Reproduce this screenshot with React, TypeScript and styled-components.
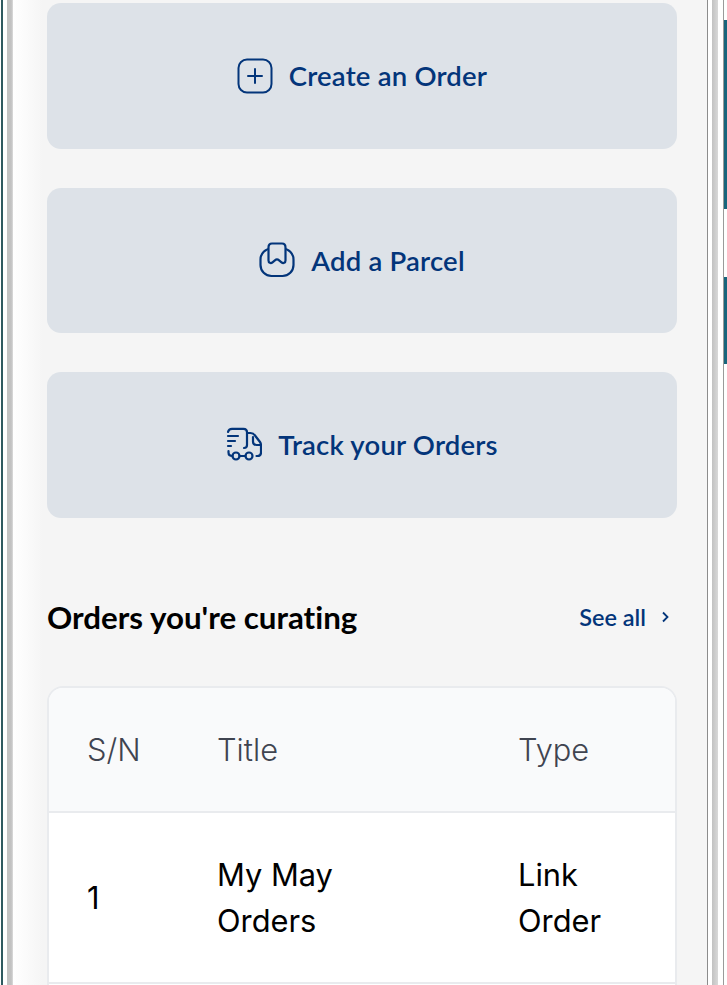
import React from 'react'
import styled, { createGlobalStyle } from 'styled-components'

const GlobalStyle = createGlobalStyle`
  html, body { margin: 0; padding: 0; background: #fff; }
  body { font-family: 'Lato', 'Liberation Sans', sans-serif; font-variant-ligatures: none; }
`

const actions = [
  { title: 'Create an Order', icon: <PlusIcon /> },
  { title: 'Add a Parcel', icon: <ParcelIcon /> },
  { title: 'Track your Orders', icon: <TruckIcon /> },
]

export default function App() {
  return (
    <>
      <GlobalStyle />
      <Window>
        <LeftChrome>
          <DarkEdge />
          <GreyEdge />
        </LeftChrome>
        <Content>
          <Actions>
            {actions.map(action => (
              <ActionCard key={action.title}>
                {action.icon}
                <span>{action.title}</span>
              </ActionCard>
            ))}
          </Actions>
          <SectionHeader>
            <SectionTitle>Orders you're curating</SectionTitle>
            <SeeAll>
              See all
              <svg width="10" height="12" viewBox="0 0 10 12" fill="none">
                <path d="M2 1.500 6.500 6 2 10.500" stroke="#03357a" strokeWidth="1.800" />
              </svg>
            </SeeAll>
          </SectionHeader>
          <TableCard>
            <HeadRow>
              <div>S/N</div>
              <div>Title</div>
              <div>Type</div>
            </HeadRow>
            <BodyRow>
              <div>1</div>
              <div>My May<br />Orders</div>
              <div>Link<br />Order</div>
            </BodyRow>
          </TableCard>
        </Content>
        <RightChrome>
          <GreyBand />
          <Tabs>
            <Tab $height={189} />
            <Tab $height={87} />
          </Tabs>
        </RightChrome>
      </Window>
    </>
  )
}

function PlusIcon() {
  return (
    <svg width="36" height="36" viewBox="0 0 36 36" fill="none" stroke="#03357a" strokeWidth="2">
      <rect x="1.500" y="1.500" width="33" height="33" rx="8.500" />
      <path d="M18 11v14M11 18h14" strokeLinecap="round" />
    </svg>
  )
}

function ParcelIcon() {
  return (
    <svg width="36" height="36" viewBox="0 0 36 36" fill="none" stroke="#03357a" strokeWidth="2.200">
      <rect x="1.500" y="6.500" width="33" height="27.500" rx="11" />
      <path
        d="M9.500 5.500C9.500 3 11 1.500 13 1.500h10c2 0 3.500 1.500 3.500 4v13c0 2.400-2.200 3.300-4 1.800l-2.400-2c-1.200-1-3-1-4.200 0l-2.400 2c-1.800 1.500-4 .6-4-1.800z"
        fill="#dde2e8"
      />
    </svg>
  )
}

function TruckIcon() {
  return (
    <svg width="36" height="36" viewBox="0 0 36 36" fill="none" stroke="#03357a" strokeWidth="2.200" strokeLinecap="round">
      <path d="M2 5c.5-2 2-3.200 4-3.200h11.500c2.300 0 3.500 1.200 3.500 3.500V18c0 2-1 3-3 3" />
      <path d="M21.500 6h3c2 0 3.500 1 4.500 2.500l5 6.500c.7 1 1 2 1 3v7.500c0 2.200-1.200 3.500-3.500 3.500h-1" />
      <path d="M27 10v4.500c0 2 1.200 3.500 3.500 3.500h4" />
      <path d="M13.500 29h6M2.500 24v1.500c0 2.200 1.500 3.500 4 3.500" />
      <path d="M2 9h10M2 14h7M2 19h3" />
      <circle cx="10" cy="29" r="3.500" />
      <circle cx="23" cy="29" r="3.500" />
    </svg>
  )
}

const Window = styled.div`
  display: flex;
  width: 727px;
  height: 985px;
  overflow: hidden;
  background: #fff;
`

const LeftChrome = styled.div`
  display: flex;
  flex: 0 0 13px;
  padding-left: 1px;
  box-sizing: border-box;
`

const DarkEdge = styled.div`
  width: 2px;
  margin-right: 4px;
  background: #2f5a60;
`

const GreyEdge = styled.div`
  width: 6px;
  background: linear-gradient(90deg, #c2c2c2 70%, #dcdcdc);
`

const Content = styled.div`
  flex: 0 0 695px;
  box-sizing: border-box;
  height: 985px;
  padding: 3px 30px 0 34px;
  border-right: 1px solid #8c8c8c;
  background: linear-gradient(90deg, #fff, #f5f5f5 30px);
`

const Actions = styled.div`
  display: flex;
  flex-direction: column;
  gap: 39px;
`

const ActionCard = styled.div`
  display: flex;
  align-items: center;
  justify-content: center;
  gap: 16px;
  height: 145.500px;
  border-radius: 14px;
  background: #dde2e8;
  color: #03357a;
  font-size: 27.500px;
  font-weight: 600;
  letter-spacing: 0.200px;
`

const SectionHeader = styled.div`
  display: flex;
  align-items: center;
  justify-content: space-between;
  height: 40px;
  margin-top: 79.500px;
  padding-right: 6px;
`

const SectionTitle = styled.h2`
  margin: 0;
  color: #000;
  font-size: 31.300px;
  font-weight: 700;
`

const SeeAll = styled.div`
  display: flex;
  align-items: center;
  gap: 15px;
  color: #03357a;
  font-size: 23.500px;
  font-weight: 600;
`

const TableCard = styled.div`
  box-sizing: border-box;
  height: 320px;
  margin-top: 49px;
  border: 2px solid #e9ebee;
  border-radius: 16px;
  background: #fff;
  overflow: hidden;
  font-family: 'Inter', 'Liberation Sans', sans-serif;
`

const Row = styled.div`
  display: grid;
  grid-template-columns: 130px 301px 1fr;
  align-items: center;
  padding-left: 38px;
`

const HeadRow = styled(Row)`
  height: 123px;
  border-bottom: 2px solid #e9ebee;
  background: #f9fafb;
  color: #3f4450;
  font-size: 30.800px;
  font-weight: 300;
`

const BodyRow = styled(Row)`
  height: 169px;
  border-bottom: 2px solid #e9ebee;
  color: #000;
  font-size: 30.800px;
  line-height: 46px;
`

const RightChrome = styled.div`
  display: flex;
  flex: 1;
  padding-left: 4px;
`

const GreyBand = styled.div`
  width: 6px;
  margin-right: 5px;
  background: linear-gradient(90deg, #c2c2c2, #d8d8d8);
`

const Tabs = styled.div`
  display: flex;
  flex-direction: column;
  flex: 1;
  gap: 68px;
  padding-top: 20px;
  border-left: 1px solid #9a9a9a;
`

const Tab = styled.div<{ $height: number }>`
  height: ${p => p.$height}px;
  background: #17657c;
`
